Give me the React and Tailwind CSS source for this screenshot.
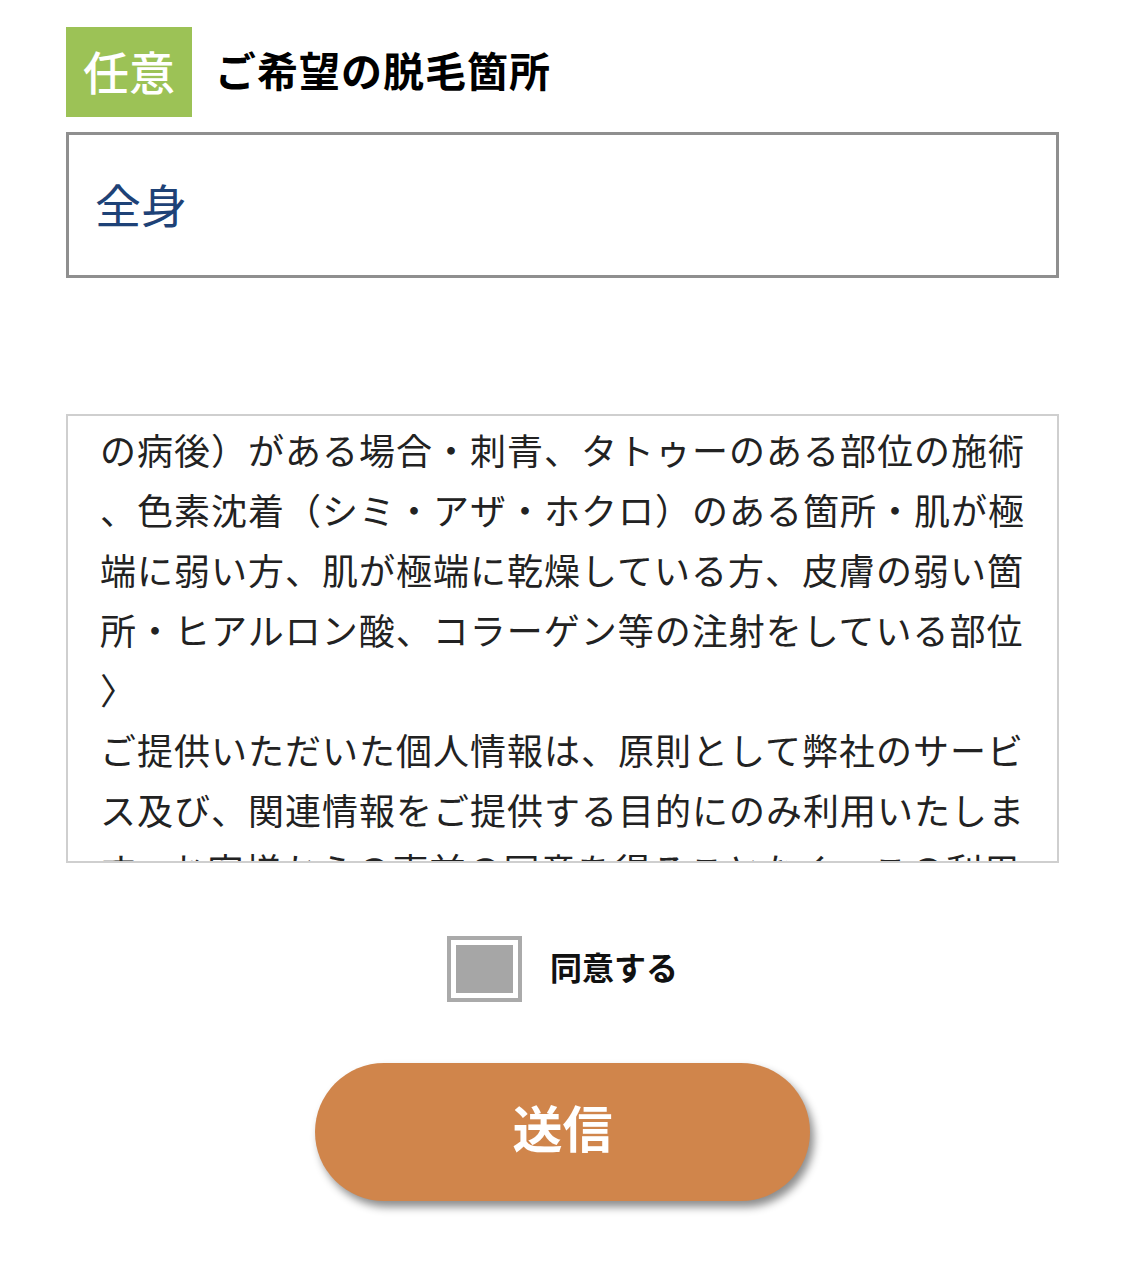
import React from "react";

const font = { fontFamily: '"Noto Sans CJK JP", "Noto Sans", sans-serif' };

const lines = [
  "の病後）がある場合・刺青、タトゥーのある部位の施術",
  "、色素沈着（シミ・アザ・ホクロ）のある箇所・肌が極",
  "端に弱い方、肌が極端に乾燥している方、皮膚の弱い箇",
  "所・ヒアルロン酸、コラーゲン等の注射をしている部位",
  "〉",
  "ご提供いただいた個人情報は、原則として弊社のサービ",
  "ス及び、関連情報をご提供する目的にのみ利用いたしま",
  "す。お客様からの事前の同意を得ることなく、この利用",
];

const App = () => {
  return (
    <div className="min-h-[1266px] bg-white px-[66px] pt-[27px]" style={font}>
      <div className="flex items-center">
        <div className="flex h-[90px] w-[126px] items-center justify-center bg-[#9cc256] pb-[4px] text-[46px] font-medium leading-none text-white">
          任意
        </div>
        <h2 className="ml-[23px] pb-[6px] text-[41px] font-bold leading-none tracking-[1px] text-black">
          ご希望の脱毛箇所
        </h2>
      </div>

      <div className="mt-[15px] flex h-[146px] items-center border-[3px] border-[#8f8f8f] pb-[4px] pl-[26px]">
        <span className="text-[46px] leading-none text-[#1e4277]">全身</span>
      </div>

      <div className="mt-[136px] h-[449px] overflow-hidden border-2 border-[#cfcfcf] pl-[32px] pt-[3px]">
        {lines.map((line, i) => (
          <div
            key={i}
            className="whitespace-nowrap text-[36px] leading-[60px] tracking-[1px] text-[#222]"
          >
            {line}
          </div>
        ))}
      </div>

      <div className="mt-[73px] flex items-center justify-center">
        <label className="flex items-center gap-[28px]">
          <span className="flex h-[66px] w-[75px] items-center justify-center border-4 border-[#aaaaaa] bg-white">
            <span className="h-[48px] w-[57px] bg-[#a6a6a6]" />
          </span>
          <span className="pb-[6px] text-[32px] font-bold leading-none text-[#111]">同意する</span>
        </label>
      </div>

      <div className="mt-[61px] flex justify-center">
        <button
          type="button"
          className="flex h-[138px] w-[495px] items-center justify-center rounded-full bg-[#d0854b] pb-[12px] text-[50px] font-bold leading-none text-white shadow-[4px_6px_8px_rgba(0,0,0,0.45)]"
        >
          送信
        </button>
      </div>
    </div>
  );
};

export default App;
